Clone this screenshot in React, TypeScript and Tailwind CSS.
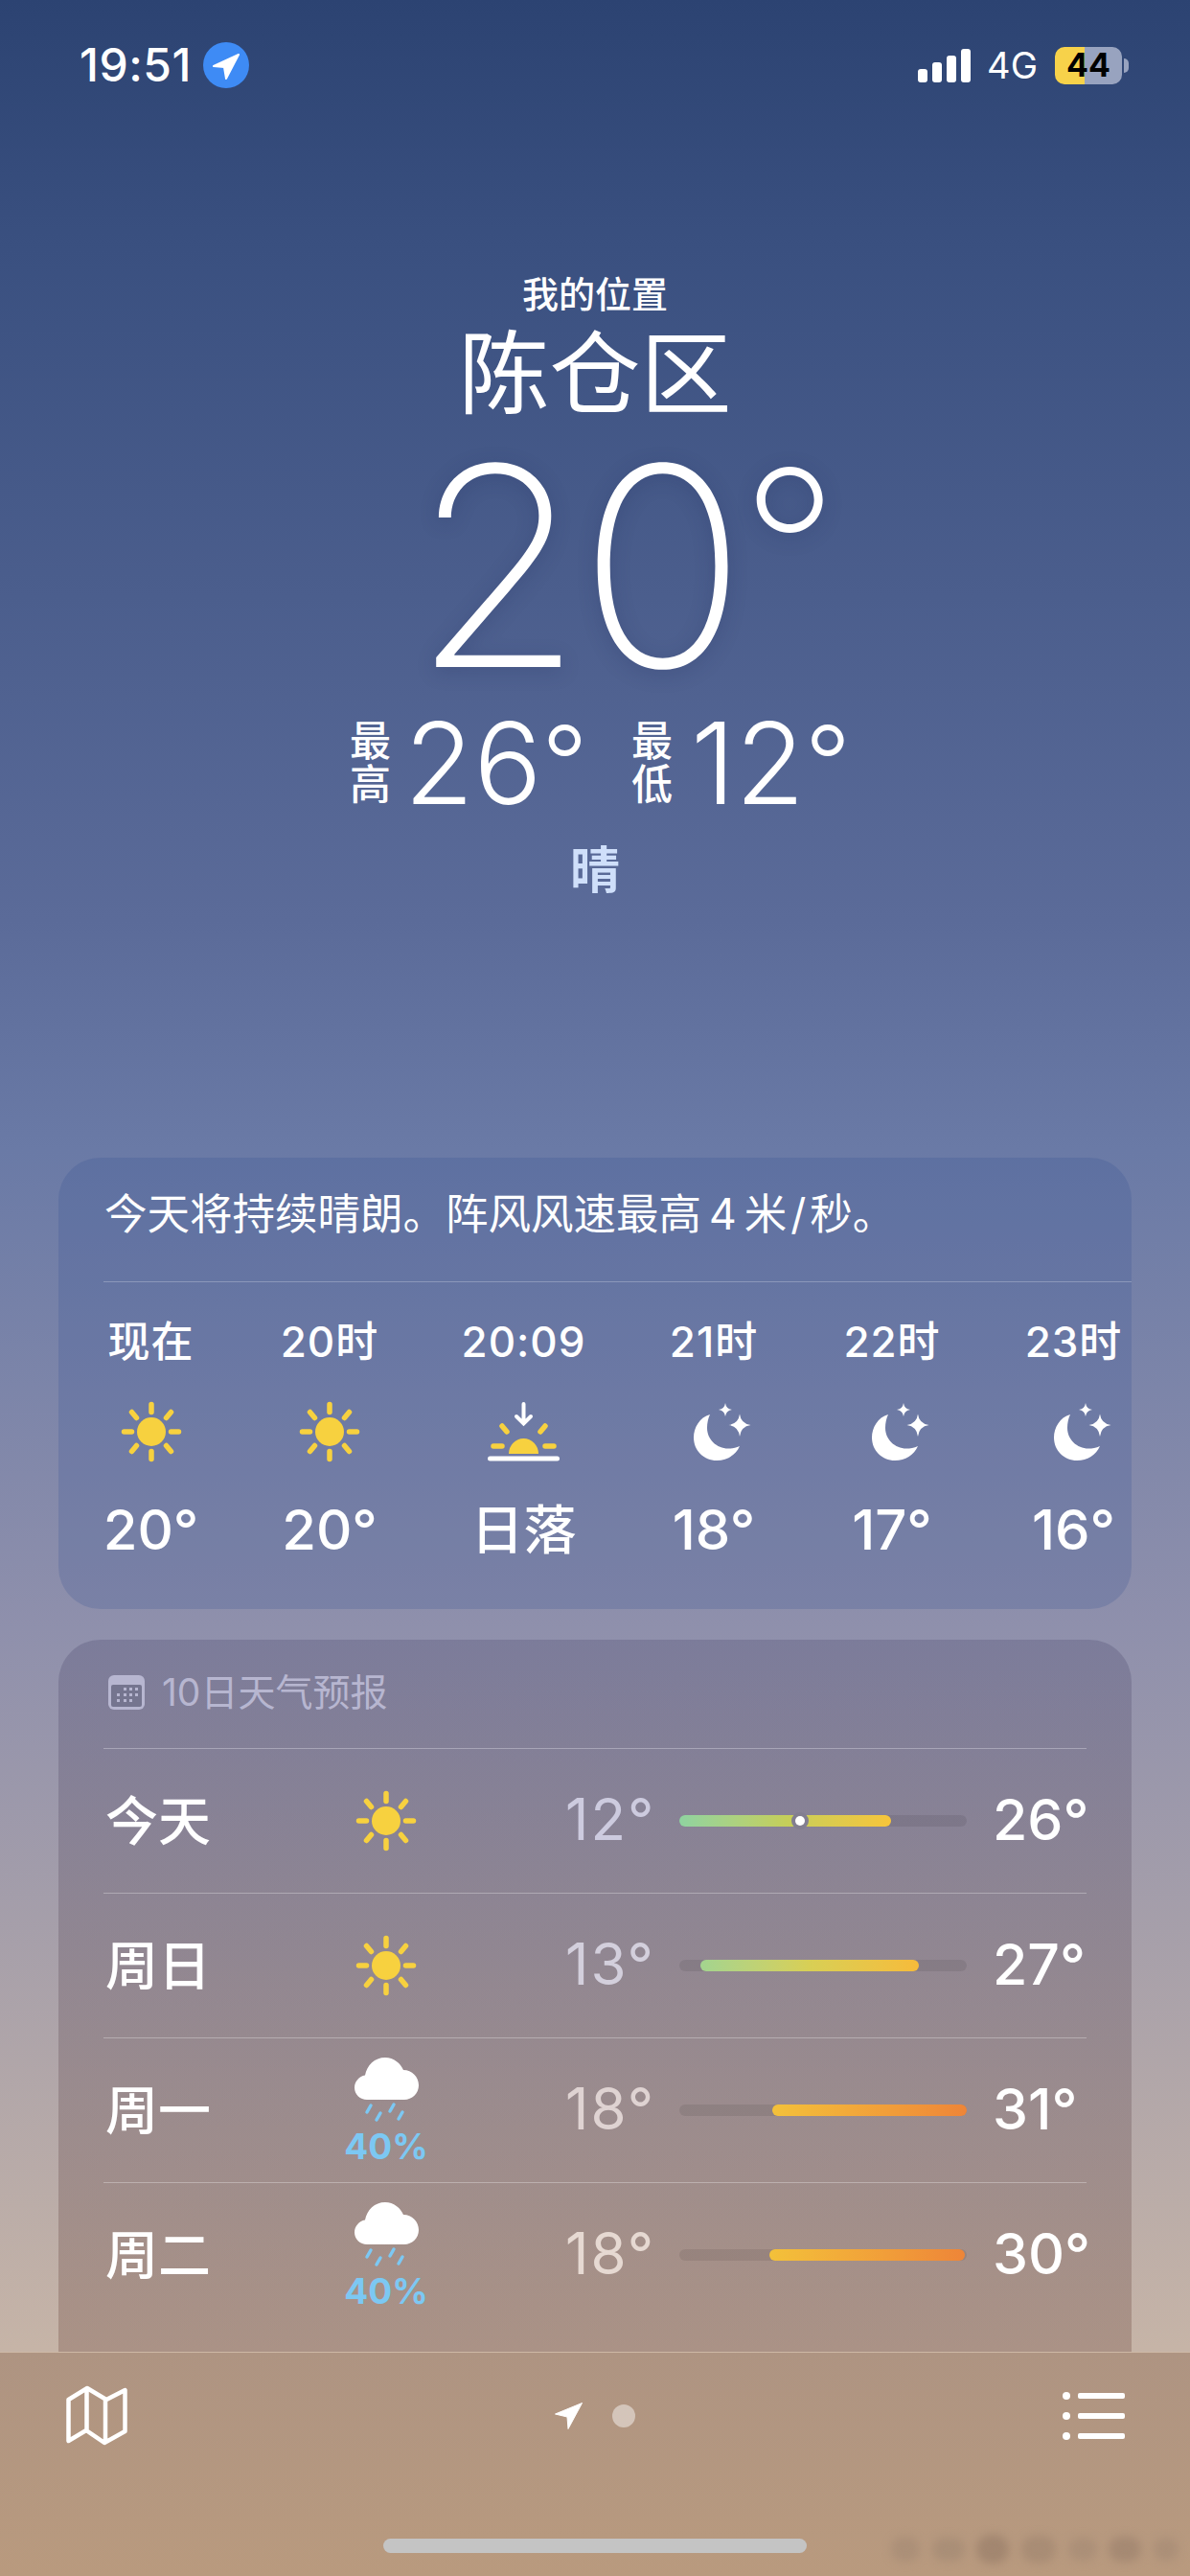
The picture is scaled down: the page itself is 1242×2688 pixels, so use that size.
const hours = [
  { label: "现在", icon: "sun", temp: "20°", size: "text-[58px]", w: "w-[93px]" },
  { label: "20时", icon: "sun", temp: "20°", size: "text-[58px]", w: "w-[102px]" },
  { label: "20:09", icon: "sunset", temp: "日落", size: "text-[55px]", w: "w-[125px]" },
  { label: "21时", icon: "moon", temp: "18°", size: "text-[58px]", w: "w-[94px]" },
  { label: "22时", icon: "moon", temp: "17°", size: "text-[58px]", w: "w-[100px]" },
  { label: "23时", icon: "moon", temp: "16°", size: "text-[58px]", w: "w-[101px]" },
]

const days = [
  { day: "今天", rain: false, low: "12°", high: "26°", left: 0, width: 221, dot: 126, lowColor: "text-[#cdcbdf]", fill: "bg-gradient-to-r from-[#8fd3a0] via-[#c4cf5a] to-[#f7c53a]" },
  { day: "周日", rain: false, low: "13°", high: "27°", left: 22, width: 228, dot: null, lowColor: "text-[#d3cfdc]", fill: "bg-gradient-to-r from-[#a3d48f] via-[#d8cf55] to-[#f6bb3a]" },
  { day: "周一", rain: true, low: "18°", high: "31°", left: 97, width: 203, dot: null, lowColor: "text-[#dfd3d2]", fill: "bg-gradient-to-r from-[#f3c13a] to-[#ee8538]" },
  { day: "周二", rain: true, low: "18°", high: "30°", left: 94, width: 204, dot: null, lowColor: "text-[#e6d9d2]", fill: "bg-gradient-to-r from-[#f3c13a] to-[#ee8538]" },
]

function Sun() {
  return (
    <svg width="64" height="64" viewBox="0 0 64 64" fill="none" stroke="#f7d13f" strokeWidth="5.5" strokeLinecap="round">
      <circle cx="32" cy="32" r="15" fill="#f7d13f" stroke="none" />
      <path d="M32 3.5v8M32 52.5v8M3.5 32h8M52.5 32h8M11.5 11.5l5 6M47.5 46.5l5 6M52.5 11.5l-5 6M16.500 46.500l-5 6" />
    </svg>
  )
}

function Sunset() {
  return (
    <svg width="75" height="64" viewBox="0 0 75 64" fill="none" strokeLinecap="round">
      <path d="M22 55a15.500 16 0 0 1 31 0z" fill="#f7d13f" />
      <path d="M6 47h9M60 47h9M15 26l5 6M60 26l-5 6" stroke="#f7d13f" strokeWidth="5.500" />
      <path d="M37.500 3v20M30 16l7.500 7.500 7.500-7.500" stroke="#fff" strokeWidth="4" />
      <path d="M2.500 60h70" stroke="#fff" strokeWidth="5" />
    </svg>
  )
}

function Moon() {
  return (
    <svg className="ml-[18px]" width="60" height="60" viewBox="0 0 60 60" fill="#fff">
      <path d="M17 12C6 15 0 26 0 36c0 14 11 24 24 24 11 0 20-6 24-15-4 2-8 2.500-12 2.500C24 47.500 14 38 14 26c0-5 1-10 3-14z" />
      <path d="M48 11.500q1.200 10 11.500 11.500Q49.200 24.500 48 35 46.800 24.500 36.500 23 46.800 21.500 48 11.500z" />
      <path d="M33 0q.8 6.200 7 7-6.200.8-7 7-.8-6.200-7-7 6.200-.8 7-7z" />
    </svg>
  )
}

function HourIcon({ name }: { name: string }) {
  if (name === "sun") return <Sun />
  if (name === "sunset") return <Sunset />
  return <Moon />
}

function CloudRain() {
  return (
    <svg width="67" height="70" viewBox="0 0 67 70" fill="none">
      <path d="M13 44C6 44 0 38.500 0 31.500 0 25 5 19.500 11 18.500 13 8 21 0 32 0c9 0 16 6 19 13 9 0 16 7 16 16 0 8.500-7 15-15 15z" fill="#fff" />
      <path d="M17 50l-4 7M27 58l-4 7M41 49l-4 7M50 57l-4 7" stroke="#7cc8f3" strokeWidth="3.500" strokeLinecap="round" />
    </svg>
  )
}

function Calendar() {
  return (
    <svg width="38" height="36" viewBox="0 0 38 36">
      <rect width="38" height="36" rx="6" fill="#b7b6d0" />
      <rect x="3" y="10" width="32" height="23" rx="2" fill="#75758f" />
      <g fill="#b7b6d0">
        <rect x="16" y="13" width="3" height="3" />
        <rect x="22" y="13" width="3" height="3" />
        <rect x="28" y="13" width="3" height="3" />
        <rect x="9" y="19" width="3" height="3" />
        <rect x="16" y="19" width="3" height="3" />
        <rect x="22" y="19" width="3" height="3" />
        <rect x="28" y="19" width="3" height="3" />
        <rect x="9" y="25" width="3" height="3" />
        <rect x="16" y="25" width="3" height="3" />
        <rect x="22" y="25" width="3" height="3" />
      </g>
    </svg>
  )
}

function StatusBar() {
  return (
    <div className="flex h-[136px] shrink-0 items-center justify-between pl-[83px] pr-[64px] text-white">
      <div className="flex items-center">
        <span className="w-[129px] text-[48px] leading-none font-medium tracking-[0.5px]">19:51</span>
        <span className="flex h-[48px] w-[48px] items-center justify-center rounded-full bg-[#3e8bf5]">
          <svg width="48" height="48" viewBox="0 0 48 48" fill="#fff" stroke="#fff" strokeWidth="2" strokeLinejoin="round">
            <path d="M37 13L11 25l11 1 2 12z" />
          </svg>
        </span>
      </div>
      <div className="flex items-center">
        <div className="flex items-end gap-[5px]">
          <span className="h-[14px] w-[10px] rounded-[3px] bg-white" />
          <span className="h-[21px] w-[10px] rounded-[3px] bg-white" />
          <span className="h-[28px] w-[10px] rounded-[3px] bg-white" />
          <span className="h-[35px] w-[10px] rounded-[3px] bg-white" />
        </div>
        <span className="ml-[17px] text-[38px] leading-none">4G</span>
        <div className="ml-[18px] flex h-[39px] w-[70px] items-center justify-center rounded-[10px] bg-[linear-gradient(90deg,#f7d24a_45%,#98a3bf_45%)] text-[34px] leading-none font-bold text-black">
          44
        </div>
        <span className="ml-[2px] h-[15px] w-[5px] rounded-r-full bg-[#98a3bf]" />
      </div>
    </div>
  )
}

function Hero() {
  return (
    <div className="flex flex-col items-center pt-[141px] text-white">
      <div className="h-[60px] text-[38px] leading-[60px] font-medium">我的位置</div>
      <div className="mt-[4px] h-[100px] text-[95px] leading-[100px] font-normal">陈仓区</div>
      <div className="flex h-[300px] pl-[63px] text-[290px] leading-[300px] font-extralight [text-shadow:0_4px_20px_rgba(30,45,90,0.25)]">
        <span className="tracking-[-5px]">20</span>
        <span className="-ml-[1px] inline-block -translate-y-[20px] text-[224px]">°</span>
      </div>
      <div className="mt-[5px] flex h-[100px] items-center pl-[4px]">
        <div className="flex w-[43px] flex-col text-[43px] leading-[45px] font-medium">
          <span>最</span>
          <span>高</span>
        </div>
        <div className="ml-[14px] w-[184px] text-[118px] leading-none font-light whitespace-nowrap">
          26<span className="inline-block -translate-y-[6px] text-[105px]">°</span>
        </div>
        <div className="ml-[53px] flex w-[43px] flex-col text-[43px] leading-[45px] font-medium">
          <span>最</span>
          <span>低</span>
        </div>
        <div className="ml-[19px] w-[160px] text-[118px] leading-none font-light whitespace-nowrap">
          12<span className="inline-block -translate-y-[6px] text-[105px]">°</span>
        </div>
      </div>
      <div className="mt-[33px] h-[60px] text-[52px] leading-[60px] font-semibold text-[#cfdffa]">晴</div>
    </div>
  )
}

function HourlyCard() {
  return (
    <section className="mx-[61px] mt-[269px] h-[471px] shrink-0 overflow-hidden rounded-[44px] bg-[#2f4a8f]/20 text-white">
      <div className="flex h-[129px] items-center pb-[10px] pl-[48px] text-[44.5px] leading-none">
        今天将持续晴朗。阵风风速最高
        <span className="mx-[8px]">4</span>
        米<span className="mx-[4px]">/</span>秒。
      </div>
      <div className="ml-[47px] h-px bg-white/25" />
      <div className="flex gap-[89px] pl-[50px] pt-[37px]">
        {hours.map((h) => (
          <div key={h.label} className={`flex shrink-0 flex-col items-center ${h.w}`}>
            <span className="h-[50px] text-[44px] leading-[50px] font-medium tracking-[1px] whitespace-nowrap">{h.label}</span>
            <div className="mt-[37px] flex h-[64px] items-center justify-center">
              <HourIcon name={h.icon} />
            </div>
            <span className={`mt-[40px] h-[60px] leading-[60px] font-medium whitespace-nowrap ${h.size}`}>{h.temp}</span>
          </div>
        ))}
      </div>
    </section>
  )
}

function DailyCard() {
  return (
    <section className="mx-[61px] mt-[32px] min-h-0 flex-1 overflow-hidden rounded-t-[44px] bg-gradient-to-b from-[#2d2953]/20 to-[#3c0a00]/20 text-white">
      <div className="ml-[52px] flex h-[113px] items-center gap-[18px] pb-[4px] text-[39px] leading-none text-[#b7b6d0]">
        <Calendar />
        <span>10日天气预报</span>
      </div>
      <div className="mx-[47px]">
        {days.map((d) => (
          <div key={d.day} className="flex h-[151px] items-center border-t border-white/30">
            <span className="w-[250px] pl-[2px] text-[55px] leading-none font-medium">{d.day}</span>
            <div className="flex w-[90px] flex-col items-center">
              {d.rain ? (
                <>
                  <CloudRain />
                  <span className="mt-[4px] text-[37px] leading-[37px] font-bold text-[#7cc8f3]">40%</span>
                </>
              ) : (
                <Sun />
              )}
            </div>
            <span className={`w-[236px] pb-[4px] pl-[142px] text-[60px] leading-none tracking-[2px] whitespace-nowrap ${d.lowColor}`}>{d.low}</span>
            <div className="relative ml-[25px] h-[12px] w-[300px] rounded-full bg-black/[0.08]">
              <div
                className={`absolute top-0 h-full rounded-full ${d.fill}`}
                style={{ left: d.left, width: d.width }}
              />
              {d.dot !== null && (
                <div
                  className="absolute top-[1px] h-[10px] w-[10px] -translate-x-1/2 rounded-full bg-white ring-4 ring-[#827e90]"
                  style={{ left: d.dot }}
                />
              )}
            </div>
            <span className="w-[125px] pb-[4px] pl-[27px] text-[59px] leading-none font-medium whitespace-nowrap">{d.high}</span>
          </div>
        ))}
      </div>
    </section>
  )
}

function BottomBar() {
  return (
    <footer className="relative h-[234px] shrink-0 border-t border-white/30 bg-gradient-to-b from-[#ae9482] to-[#b99a7e]">
      <div className="flex h-[131px] items-center justify-between pl-[69px] pr-[68px]">
        <svg width="64" height="63" viewBox="0 0 64 63" fill="none" stroke="#fff" strokeWidth="4.500" strokeLinejoin="round">
          <path d="M2.500 15L22 3l20 12 19.500-10v43L40 60 21 47 2.500 58zM21.500 3v44M41 15v45" />
        </svg>
        <div className="flex items-center gap-[31px]">
          <svg width="29" height="28" viewBox="0 0 29 28" fill="#fff" stroke="#fff" strokeLinejoin="round">
            <path d="M28.500 .5L.5 12l12.500 3 1 12.500z" />
          </svg>
          <span className="h-[24px] w-[24px] rounded-full bg-white/45" />
        </div>
        <div className="flex w-[65px] flex-col gap-[13px]">
          <div className="flex items-center justify-between">
            <span className="h-[8px] w-[8px] rounded-full bg-white" />
            <span className="h-[6px] w-[49px] rounded-[2px] bg-white" />
          </div>
          <div className="flex items-center justify-between">
            <span className="h-[8px] w-[8px] rounded-full bg-white" />
            <span className="h-[6px] w-[49px] rounded-[2px] bg-white" />
          </div>
          <div className="flex items-center justify-between">
            <span className="h-[8px] w-[8px] rounded-full bg-white" />
            <span className="h-[6px] w-[49px] rounded-[2px] bg-white" />
          </div>
        </div>
      </div>
      <div className="mx-auto mt-[63px] h-[15px] w-[442px] rounded-full bg-[#c4c4c4]" />
      {/* smudged-out watermark */}
      <div className="absolute right-[12px] top-[188px] flex h-[34px] w-[300px] items-center justify-between blur-[5px]">
        <span className="h-[26px] w-[30px] rounded-full bg-[#a08672]/50" />
        <span className="h-[24px] w-[34px] rounded-full bg-[#9c8370]/50" />
        <span className="h-[30px] w-[34px] rounded-full bg-[#8e7461]/50" />
        <span className="h-[28px] w-[36px] rounded-full bg-[#9a806c]/50" />
        <span className="h-[24px] w-[30px] rounded-full bg-[#a08672]/50" />
        <span className="h-[26px] w-[34px] rounded-full bg-[#947a67]/50" />
        <span className="h-[24px] w-[26px] rounded-full bg-[#a08672]/50" />
      </div>
    </footer>
  )
}

export default function App() {
  return (
    <div className="flex h-[2688px] w-[1242px] flex-col overflow-hidden bg-[linear-gradient(180deg,#2c4372_0px,#3a5080_260px,#5b6b99_960px,#6a7aa6_1200px,#8f90ac_1700px,#c6b4a7_2450px)] font-[Inter,'Noto_Sans_CJK_SC',sans-serif]">
      <div className="flex min-h-0 flex-1 flex-col overflow-hidden">
        <StatusBar />
        <Hero />
        <HourlyCard />
        <DailyCard />
      </div>
      <BottomBar />
    </div>
  )
}
